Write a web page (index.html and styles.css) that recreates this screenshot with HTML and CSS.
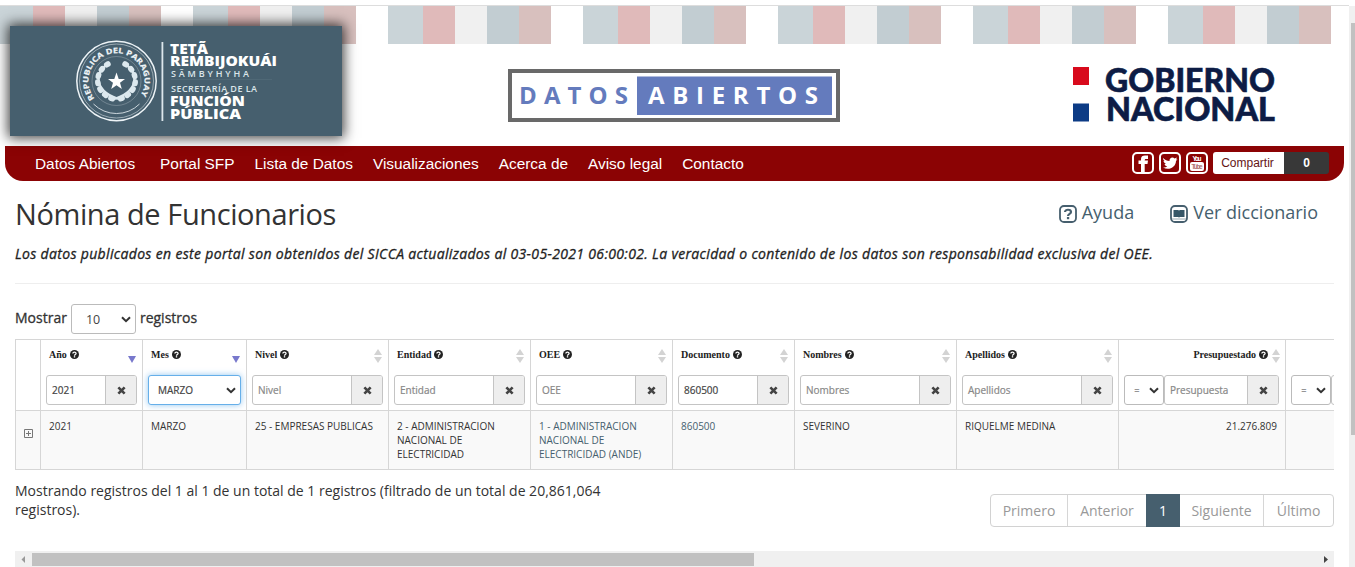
FILE: index.html
```
<!DOCTYPE html>
<html lang="es">
<head>
<meta charset="utf-8">
<title>Nómina de Funcionarios</title>
<link rel="stylesheet" href="styles.css">
</head>
<body>
<svg class="defs" width="0" height="0">
  <symbol id="help" viewBox="0 0 16 16"><circle cx="8" cy="8" r="8" fill="#222"/><path d="M5 6.2C5.200 3.200 10.800 3 10.800 6C10.800 8 8 7.800 8 10" fill="none" stroke="#fff" stroke-width="2.300"/><rect x="6.800" y="11" width="2.400" height="2.300" fill="#fff"/></symbol>
  <symbol id="x" viewBox="0 0 10 10"><path d="M1.500 1.500L8.500 8.500M8.500 1.500L1.500 8.500" stroke="#444" stroke-width="2.900"/></symbol>
  <symbol id="chev" viewBox="0 0 10 7"><path d="M1 1.200L5 5.200L9 1.200" fill="none" stroke="#333" stroke-width="2"/></symbol>
  <symbol id="sort" viewBox="0 0 8 14"><path d="M4 0L8 6H0ZM0 8H8L4 14Z" fill="#d3d3d3"/></symbol>
  <symbol id="down" viewBox="0 0 8 7"><path d="M0 0H8L4 7Z" fill="#7878cc"/></symbol>
</svg>
<div class="window">
  <div class="page">
    <header class="header">
      <div class="brand">
        <svg width="332" height="110" viewBox="0 0 332 110">
          <g fill="none" stroke="#eef4f7">
            <circle cx="106.500" cy="55" r="39.700" stroke-width="1.500"/>
            <circle cx="106.500" cy="55" r="37" stroke-width=".5"/>
            <path d="M83.500 78A32.500 32.500 0 0 0 129.500 78" stroke-width=".8"/>
            <circle cx="106.500" cy="55" r="24.500" stroke-width=".5" opacity=".5"/>
          </g>
          <path id="ring" d="M84.500 72.500A28 28 0 1 1 128.500 72.500" fill="none"/>
          <text class="seal"><textPath href="#ring" textLength="121" lengthAdjust="spacingAndGlyphs">REPUBLICA DEL PARAGUAY</textPath></text>
          <path d="M106.500 46.500L108.700 53H115L110 56.800L111.800 63L106.500 59.200L101.200 63L103 56.800L98 53H104.300Z" fill="#fff"/>
          <g fill="none" stroke="#dce8ee" stroke-linecap="round">
            <path d="M98 38C84 46 83 66 103 73" stroke-width="5.500" stroke-dasharray="1.500 5.800"/>
            <path d="M98 38C84 46 83 66 112 74" stroke-width="2.200"/>
            <path d="M115 38C129 46 130 66 110 73" stroke-width="5.500" stroke-dasharray="1.500 5.800"/>
            <path d="M115 38C129 46 130 66 101 74" stroke-width="2.200"/>
          </g>
          <rect x="151.500" y="16" width="1.800" height="79" fill="#dce6eb"/>
          <g class="brand-bold">
            <text x="160" y="28" textLength="38" lengthAdjust="spacingAndGlyphs">TETÃ</text>
            <text x="160" y="40" textLength="107" lengthAdjust="spacingAndGlyphs">REMBIJOKUÁI</text>
            <text x="160" y="80" textLength="75" lengthAdjust="spacingAndGlyphs">FUNCIÓN</text>
            <text x="160" y="92.500" textLength="71" lengthAdjust="spacingAndGlyphs">PÚBLICA</text>
          </g>
          <g class="brand-thin">
            <text x="161" y="50.500" textLength="78">SÃMBYHYHA</text>
            <text x="161" y="65.500" textLength="86">SECRETARÍA DE LA</text>
          </g>
          <path d="M161 53.500H262" stroke="#4f6876"/>
        </svg>
      </div>
      <svg class="open-data" width="332" height="53" viewBox="0 0 332 53">
        <rect x="2" y="2" width="328" height="49" fill="#fff" stroke="#696969" stroke-width="4"/>
        <rect x="129" y="7.500" width="195" height="38.500" fill="#647bbd"/>
        <text x="11" y="35" textLength="109" fill="#647bbd">DATOS</text>
        <text x="140" y="35" textLength="170" fill="#fff">ABIERTOS</text>
      </svg>
      <svg class="gov" width="210" height="70" viewBox="0 0 210 70">
        <rect x="3" y="7" width="16" height="18" fill="#d80a1c"/>
        <rect x="3" y="43.500" width="16" height="18" fill="#0c3b85"/>
        <text x="35" y="31.500" textLength="170" lengthAdjust="spacingAndGlyphs">GOBIERNO</text>
        <text x="36" y="60.500" textLength="169" lengthAdjust="spacingAndGlyphs">NACIONAL</text>
      </svg>
    </header>
    <nav class="nav">
      <div class="links"><a class="wide">Datos Abiertos</a><a>Portal SFP</a><a>Lista de Datos</a><a>Visualizaciones</a><a>Acerca de</a><a>Aviso legal</a><a>Contacto</a></div>
      <div class="social">
        <svg width="22" height="22" viewBox="0 0 22 22"><rect x="1" y="1" width="20" height="20" rx="4" class="frame"/><path d="M9 20V12H6.500V8.500H9V7C9 4.500 10.500 3.500 13 3.500H16V7H14C13 7 12.700 7.500 12.700 8.500H16L15.500 12H12.700V20Z" fill="#fff"/></svg>
        <svg width="22" height="22" viewBox="0 0 22 22"><rect x="1" y="1" width="20" height="20" rx="4" class="frame"/><path d="M4 6C6 8 8 9 10.500 9C10.200 5.500 14 4.500 15.500 6.500L18 5.500L17 7.500L18.500 7.300L17 9C17 15 10 19 4 15.500C6 15.500 7.500 15 8.300 14.200C6.500 14 5.800 13 5.500 12H7C5.500 11.300 4.600 10.200 4.500 8.800L5.700 9.200C4.300 8 4 7 4 6Z" fill="#fff"/></svg>
        <svg width="22" height="22" viewBox="0 0 22 22"><rect x="1" y="1" width="20" height="20" rx="4" class="frame"/><text x="6.500" y="9" class="yt" fill="#fff" textLength="9">You</text><rect x="4" y="10" width="14" height="9" rx="2" fill="#fff"/><text x="5.500" y="17.300" class="yt" fill="#b07070" textLength="11">Tube</text></svg>
        <div class="share"><span>Compartir</span><b>0</b></div>
      </div>
    </nav>
    <main class="main">
      <div class="title-row">
        <h1>Nómina de Funcionarios</h1>
        <div class="actions">
          <a><svg width="18" height="18" viewBox="0 0 18 18"><rect x="1" y="1" width="16" height="16" rx="4" class="box"/><path d="M6 7C6 4 12 4 12 7C12 9 9 8.700 9 11" fill="none" stroke="#465f6e" stroke-width="2.200"/><rect x="7.900" y="12" width="2.300" height="2.200" fill="#465f6e"/></svg>Ayuda</a>
          <a><svg width="18" height="18" viewBox="0 0 18 18"><rect x="1" y="1" width="16" height="16" rx="4" class="box"/><path d="M3.500 5H8L9 5.500L10 5H14.500V12H10L9 12.500L8 12H3.500Z" fill="#365768"/><path d="M2 14H16" stroke="#98a9b2"/></svg>Ver diccionario</a>
        </div>
      </div>
      <p class="notice">Los datos publicados en este portal son obtenidos del SICCA actualizados al 03-05-2021 06:00:02. La veracidad o contenido de los datos son responsabilidad exclusiva del OEE.</p>
      <div class="length"><span>Mostrar</span><div class="select ten">10<svg width="10" height="7"><use href="#chev"/></svg></div><span>registros</span></div>
      <div class="table-wrap">
        <table>
          <colgroup><col class="c25"><col class="c102"><col class="c104"><col class="c142"><col class="c142"><col class="c142"><col class="c122"><col class="c162"><col class="c162"><col class="c167"><col class="c167"></colgroup>
          <thead><tr>
            <th></th>
            <th><div class="head">Año<svg class="q"><use href="#help"/></svg><svg class="desc"><use href="#down"/></svg></div><div class="group"><span class="val">2021</span><i><svg><use href="#x"/></svg></i></div></th>
            <th><div class="head">Mes<svg class="q"><use href="#help"/></svg><svg class="desc"><use href="#down"/></svg></div><div class="select month">MARZO<svg width="10" height="7"><use href="#chev"/></svg></div></th>
            <th><div class="head">Nivel<svg class="q"><use href="#help"/></svg><svg class="both"><use href="#sort"/></svg></div><div class="group"><span>Nivel</span><i><svg><use href="#x"/></svg></i></div></th>
            <th><div class="head">Entidad<svg class="q"><use href="#help"/></svg><svg class="both"><use href="#sort"/></svg></div><div class="group"><span>Entidad</span><i><svg><use href="#x"/></svg></i></div></th>
            <th><div class="head">OEE<svg class="q"><use href="#help"/></svg><svg class="both"><use href="#sort"/></svg></div><div class="group"><span>OEE</span><i><svg><use href="#x"/></svg></i></div></th>
            <th><div class="head">Documento<svg class="q"><use href="#help"/></svg><svg class="both"><use href="#sort"/></svg></div><div class="group"><span class="val">860500</span><i><svg><use href="#x"/></svg></i></div></th>
            <th><div class="head">Nombres<svg class="q"><use href="#help"/></svg><svg class="both"><use href="#sort"/></svg></div><div class="group"><span>Nombres</span><i><svg><use href="#x"/></svg></i></div></th>
            <th><div class="head">Apellidos<svg class="q"><use href="#help"/></svg><svg class="both"><use href="#sort"/></svg></div><div class="group"><span>Apellidos</span><i><svg><use href="#x"/></svg></i></div></th>
            <th><div class="head right">Presupuestado<svg class="q"><use href="#help"/></svg><svg class="both"><use href="#sort"/></svg></div><div class="pair"><div class="select op">=<svg width="10" height="7"><use href="#chev"/></svg></div><div class="group"><span>Presupuesta</span><i><svg><use href="#x"/></svg></i></div></div></th>
            <th><div class="head right"></div><div class="pair"><div class="select op">=<svg width="10" height="7"><use href="#chev"/></svg></div><div class="group"><span></span><i></i></div></div></th>
          </tr></thead>
          <tbody><tr>
            <td class="expand"><svg width="9" height="9" viewBox="0 0 9 9"><path d="M.5 .5H8.500V8.500H.5ZM2 4.500H7M4.500 2V7" fill="none" stroke="#777"/></svg></td>
            <td>2021</td><td>MARZO</td><td>25 - EMPRESAS PUBLICAS</td><td>2 - ADMINISTRACION NACIONAL DE ELECTRICIDAD</td><td class="link">1 - ADMINISTRACION NACIONAL DE ELECTRICIDAD (ANDE)</td><td class="link">860500</td><td>SEVERINO</td><td>RIQUELME MEDINA</td><td class="num">21.276.809</td><td></td>
          </tr></tbody>
        </table>
      </div>
      <div class="footer">
        <p>Mostrando registros del 1 al 1 de un total de 1 registros (filtrado de un total de 20,861,064 registros).</p>
        <div class="pager"><a class="p1">Primero</a><a class="p2">Anterior</a><a class="on">1</a><a class="p3">Siguiente</a><a class="p4">Último</a></div>
      </div>
      <div class="hscroll"><svg width="17" height="16"><path d="M10 5V12L6.500 8.500Z" fill="#999"/></svg><div class="hthumb"></div><svg class="end" width="17" height="16"><path d="M7 5V12L11 8.500Z" fill="#444"/></svg></div>
    </main>
  </div>
  <div class="vscroll"><div class="vthumb"></div></div>
</div>
</body>
</html>
```
FILE: styles.css
```
* { box-sizing: border-box; }
body { margin: 0; background: #fff; font-family: "Open Sans", "Noto Sans", sans-serif; color: #333; overflow: hidden; }
svg { flex: none; display: block; }
.defs { position: absolute; }
.window { height: 567px; padding-top: 5px; display: flex; overflow: hidden; }
.page { width: 1349px; flex: none; border-top: 1px solid #ddd; }
.header {
  height: 140px; display: flex; align-items: flex-start; padding: 20px 0 0 10px;
  background: repeating-linear-gradient(90deg, #cad4d8 0 35px, #e0baba 35px 67px, #f0f0f0 67px 99px, #c2cdd2 99px 131px, #d8c0be 131px 163px, #fff 163px 195px) -2px 0 / 1755px 38px no-repeat;
}
.brand { width: 332px; height: 110px; background: #465f6e; box-shadow: 0 0 12px 2px rgba(0,0,0,.75); }
.seal { font: 700 7.500px "Open Sans", sans-serif; fill: #eef4f7; stroke: #eef4f7; stroke-width: .2; }
.brand-bold { font: 800 14px "Open Sans", sans-serif; fill: #fff; }
.brand-thin { font: 600 9px "Open Sans", sans-serif; fill: #dbe5ea; }
.open-data { margin: 43px 0 0 166px; font: 700 24px "Open Sans", sans-serif; }
.gov { margin: 34px 0 0 230px; font: 900 32px Lato, sans-serif; fill: #0d1c45; }
.gov text { stroke: #0d1c45; stroke-width: .6; }
.nav { height: 35px; margin: 0 5px; background: #8b0304; border-radius: 0 0 18px 18px; display: flex; justify-content: space-between; align-items: center; padding: 0 15px 0 30px; }
.links { display: flex; gap: 20px; color: #fff; font: 15.400px "Liberation Sans", Arial, sans-serif; }
.wide { margin-right: 5px; }
.social { display: flex; align-items: center; gap: 5px; margin-top: -1px; }
.frame { fill: none; stroke: #fff; stroke-width: 2; }
.yt { font: 700 6.500px "Liberation Sans", sans-serif; }
.share { display: flex; width: 116px; height: 22px; border-radius: 3px; overflow: hidden; font: 12px/22px "Liberation Sans", sans-serif; text-align: center; }
.share span { width: 71px; padding-right: 2px; background: #fff; color: #641414; }
.share b { flex: 1; background: #383838; color: #fff; }
.main { padding: 0 15px; }
.title-row { height: 62px; display: flex; justify-content: space-between; }
h1 { margin: 13px 0 0; font-weight: 400; font-size: 29px; line-height: 40px; letter-spacing: -.41px; color: #333; white-space: nowrap; }
.actions { display: flex; align-items: flex-start; gap: 36px; padding: 18px 16px 0 0; font-size: 18px; line-height: 26px; color: #465f6e; }
.actions a { display: flex; align-items: center; gap: 5px; white-space: nowrap; }
.actions svg { margin-top: 3px; }
.box { fill: none; stroke: #465f6e; stroke-width: 1.800; }
.notice { margin: 0; height: 41px; border-bottom: 1px solid #eee; font-size: 14px; line-height: 22px; letter-spacing: .336px; font-style: italic; color: #222; -webkit-text-stroke: .3px #222; white-space: nowrap; }
.length { height: 55px; padding-top: 20px; display: flex; align-items: flex-start; gap: 4px; font-size: 14px; line-height: 28px; -webkit-text-stroke: .3px #333; }
.select { display: flex; align-items: center; justify-content: space-between; background: #fff; border: 1px solid #bbb; border-radius: 3px; color: #444; }
.ten { width: 65px; height: 30px; padding: 1px 4px 0 14px; font-size: 12.500px; -webkit-text-stroke: 0; }
.table-wrap { width: 1319px; height: 131px; overflow: hidden; }
table { width: 1438px; table-layout: fixed; border-collapse: collapse; }
.c25 { width: 25px; } .c102 { width: 102px; } .c104 { width: 104px; } .c122 { width: 122px; } .c142 { width: 142px; } .c162 { width: 162px; } .c167 { width: 167px; }
th, td { border: 1px solid #d6d6d6; text-align: left; vertical-align: top; }
th { height: 71px; padding: 4px 5px 0; }
.head { height: 31px; padding: 2px 0 0 3px; display: flex; font: 700 10px/18px "Liberation Serif", serif; color: #222; }
.q { width: 9px; height: 9px; margin: 4px 0 0 3px; }
.desc { width: 8px; height: 7px; margin: 10px 1px 0 auto; }
.both { width: 8px; height: 14px; margin: 3px 1px 0 auto; }
.right { justify-content: flex-end; }
.right .both { margin-left: 4px; margin-right: 0; }
.group { display: flex; height: 30px; border: 1px solid #c4c4c4; border-radius: 3px; overflow: hidden; background: #fff; flex: 1; font-size: 10px; font-weight: 400; line-height: 28px; color: #888; -webkit-text-stroke: .2px; }
.group span { flex: 1; padding-left: 5px; }
.group .val { color: #444; }
.group i { width: 31px; background: #eee; border-left: 1px solid #c4c4c4; display: flex; align-items: center; justify-content: center; }
.group i svg { width: 9px; height: 9px; }
.month { height: 30px; padding: 0 4px 0 9px; border-color: #66afe9; box-shadow: 0 0 6px rgba(102,175,233,.7); font-size: 10px; font-weight: 400; -webkit-text-stroke: .2px; }
.pair { display: flex; margin-right: 1px; }
.op { width: 40px; height: 30px; padding: 0 4px 0 9px; font-size: 10px; font-weight: 400; }
td { height: 59px; padding: 8px 8px 0; background: #f9f9f9; font-size: 10px; line-height: 14px; }
.link { color: #465f6e; }
.num { text-align: right; }
.expand { padding: 18px 0 0 8px; }
.footer { height: 81px; display: flex; justify-content: space-between; font-size: 14px; line-height: 19px; }
.footer p { width: 600px; margin: 11px 0 0; }
.pager { display: flex; width: 344px; height: 33px; margin-top: 24px; border: 1px solid #d2d2d2; border-radius: 4px; color: #999; line-height: 32px; text-align: center; }
.p1 { width: 77px; border-right: 1px solid #d6d6d6; }
.p2 { width: 78px; }
.on { width: 34px; margin: -1px 0; background: #465f6e; color: #fff; line-height: 34px; }
.p3 { width: 84px; border-right: 1px solid #d6d6d6; }
.p4 { flex: 1; }
.hscroll { height: 16px; background: #f0f0f0; display: flex; }
.hthumb { width: 722px; height: 13px; margin-top: 2px; background: #c1c1c1; }
.end { margin-left: auto; }
.vscroll { width: 6px; margin-top: 1px; padding: 17px 0 0 2px; background: #f0f0f0; }
.vthumb { height: 412px; background: #c1c1c1; }
```
